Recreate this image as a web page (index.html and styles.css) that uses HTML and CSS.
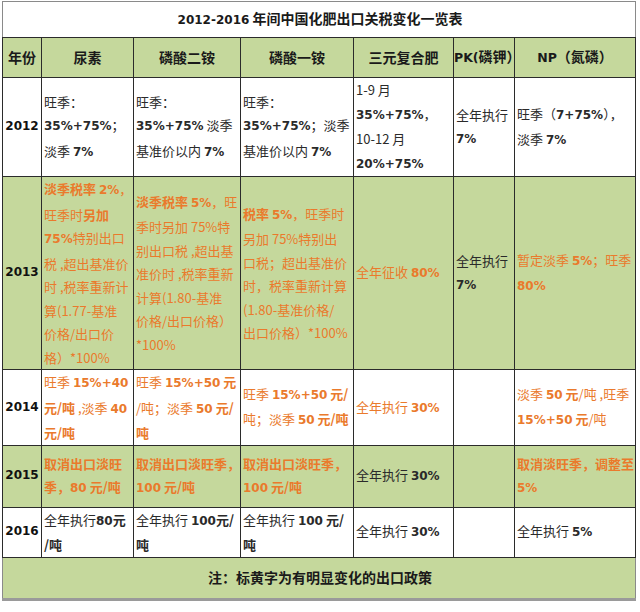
FILE: index.html
```html
<!DOCTYPE html>
<html lang="zh-CN">
<head>
<meta charset="utf-8">
<title>2012-2016 年间中国化肥出口关税变化一览表</title>
<link rel="stylesheet" href="styles.css">
</head>
<body>
<div class="wrap">
<table class="tbl">
  <colgroup>
    <col class="c-year"><col class="c-urea"><col class="c-dap"><col class="c-map"><col class="c-npk"><col class="c-pk"><col class="c-np">
  </colgroup>
  <tr class="r-title"><td colspan="7" class="title"><span class="n">2012-2016</span> 年间中国化肥出口关税变化一览表</td></tr>
  <tr class="r-head green">
    <th>年份</th><th>尿素</th><th>磷酸二铵</th><th>磷酸一铵</th><th>三元复合肥</th><th><span class="hn">PK(</span>磷钾）</th><th><span class="hn">NP</span>（氮磷）</th>
  </tr>
  <tr class="r-2012">
    <td class="year">2012</td>
    <td>旺季：<br><span class="n">35%+75%</span>；<br>淡季 <span class="n">7%</span></td>
    <td>旺季：<br><span class="n">35%+75%</span> 淡季<br>基准价以内 <span class="n">7%</span></td>
    <td>旺季：<br><span class="n">35%+75%</span>；淡季<br>基准价以内 <span class="n">7%</span></td>
    <td>1-9 月<br><span class="n">35%+75%</span>，<br>10-12 月<br><span class="n">20%+75%</span></td>
    <td>全年执行<br><span class="n">7%</span></td>
    <td>旺季（<span class="n">7+75%</span>），<br>淡季 <span class="n">7%</span></td>
  </tr>
  <tr class="r-2013 green">
    <td class="year">2013</td>
    <td class="o"><b>淡季税率 <span class="n">2%</span></b>，<br>旺季时<b>另加</b><br><span class="n">75%</span>特别出口<br>税 ,超出基准价<br>时 ,税率重新计<br>算(1.77-基准<br>价格/出口价<br>格）*100%</td>
    <td class="o"><b>淡季税率 <span class="n">5%</span></b>，旺<br>季时另加 75%特<br>别出口税 ,超出基<br>准价时 ,税率重新<br>计算(1.80-基准<br>价格/出口价格）<br>*100%</td>
    <td class="o"><b>税率 <span class="n">5%</span></b>，旺季时<br>另加 75%特别出<br>口税；超出基准价<br>时，税率重新计算<br>(1.80-基准价格/<br>出口价格）*100%</td>
    <td class="o">全年征收 <span class="n">80%</span></td>
    <td>全年执行<br><span class="n">7%</span></td>
    <td class="o">暂定淡季 <span class="n">5%</span>；旺季<br><span class="n">80%</span></td>
  </tr>
  <tr class="r-2014">
    <td class="year">2014</td>
    <td class="o">旺季 <span class="n">15%+40</span><br><b>元/吨</b> ,淡季 <span class="n">40</span><br><b>元/吨</b></td>
    <td class="o">旺季 <span class="n">15%+50</span> <b>元</b><br>/吨；淡季 <span class="n">50</span> <b>元/</b><br><b>吨</b></td>
    <td class="o">旺季 <span class="n">15%+50</span> <b>元/</b><br>吨；淡季 <span class="n">50</span> <b>元/吨</b></td>
    <td class="o">全年执行 <span class="n">30%</span></td>
    <td></td>
    <td class="o">淡季 <span class="n">50</span> <b>元</b>/吨 ,旺季<br><span class="n">15%+50</span> <b>元</b>/吨</td>
  </tr>
  <tr class="r-2015 green">
    <td class="year">2015</td>
    <td class="o"><b>取消出口淡旺<br>季，<span class="n">80</span> 元/吨</b></td>
    <td class="o"><b>取消出口淡旺季，<br><span class="n">100</span> 元/吨</b></td>
    <td class="o"><b>取消出口淡旺季，<br><span class="n">100</span> 元/吨</b></td>
    <td>全年执行 <span class="n">30%</span></td>
    <td></td>
    <td class="o"><b>取消淡旺季，调整至<br><span class="n">5%</span></b></td>
  </tr>
  <tr class="r-2016">
    <td class="year">2016</td>
    <td>全年执行<span class="n">80</span><b>元</b><br><b>/吨</b></td>
    <td>全年执行 <span class="n">100</span><b>元/</b><br><b>吨</b></td>
    <td>全年执行 <span class="n">100</span> <b>元/</b><br><b>吨</b></td>
    <td>全年执行 <span class="n">30%</span></td>
    <td></td>
    <td>全年执行 <span class="n">5%</span></td>
  </tr>
  <tr class="r-note green">
    <td colspan="7" class="note">注：标黄字为有明显变化的出口政策</td>
  </tr>
</table>
</div>
</body>
</html>
```

FILE: styles.css
```css
html, body {
  margin: 0;
  padding: 0;
  background: #ffffff;
}

.wrap {
  padding: 1px 0 0 2px;
}

.tbl {
  border-collapse: collapse;
  table-layout: fixed;
  width: 634px;
  font-family: "Noto Sans CJK SC", sans-serif;
  font-size: 13px;
  color: #2a2a2a;
  border: 1px solid #8a8a8a;
}

.c-year { width: 39px; }
.c-urea { width: 92px; }
.c-dap { width: 107px; }
.c-map { width: 113px; }
.c-npk { width: 100px; }
.c-pk { width: 61px; }
.c-np { width: 121px; }

.tbl td, .tbl th {
  border: 1px solid #2b2b2b;
  padding: 0 0 0 2px;
  vertical-align: middle;
  text-align: left;
  white-space: nowrap;
  overflow: visible;
  line-height: 23.5px;
  font-weight: 400;
}

.tbl .title {
  border-color: #8a8a8a;
  border-bottom-color: #2b2b2b;
  text-align: center;
  font-weight: 700;
  font-size: 14px;
  color: #1a1a1a;
}

.green {
  background: #c5d89c;
}

.r-title { height: 36px; }
.r-head { height: 40px; }
.r-2012 { height: 97px; }
.r-2013 { height: 192px; }
.r-2014 { height: 72px; }
.r-2015 { height: 62px; }
.r-2016 { height: 49px; }
.r-note { height: 42px; }

.tbl th {
  text-align: center;
  font-weight: 700;
  font-size: 14px;
  color: #1a1a1a;
  padding: 0;
}

.hn {
  font-family: "DejaVu Sans", sans-serif;
  font-size: 12.5px;
  font-weight: 700;
}

.tbl .year {
  text-align: center;
  padding: 0;
  font-family: "DejaVu Sans", sans-serif;
  font-size: 12px;
  font-weight: 700;
  color: #111111;
}

.n {
  font-family: "DejaVu Sans", sans-serif;
  font-size: 12px;
  font-weight: 700;
  color: inherit;
}

b {
  font-weight: 700;
}

.o {
  color: #ea7a2c;
}

.tbl .note {
  text-align: center;
  font-weight: 700;
  font-size: 14px;
  color: #1a1a1a;
  border-color: #8a8a8a;
  border-top-color: #2b2b2b;
  border-bottom: 3px solid #9a9a9a;
}
```
